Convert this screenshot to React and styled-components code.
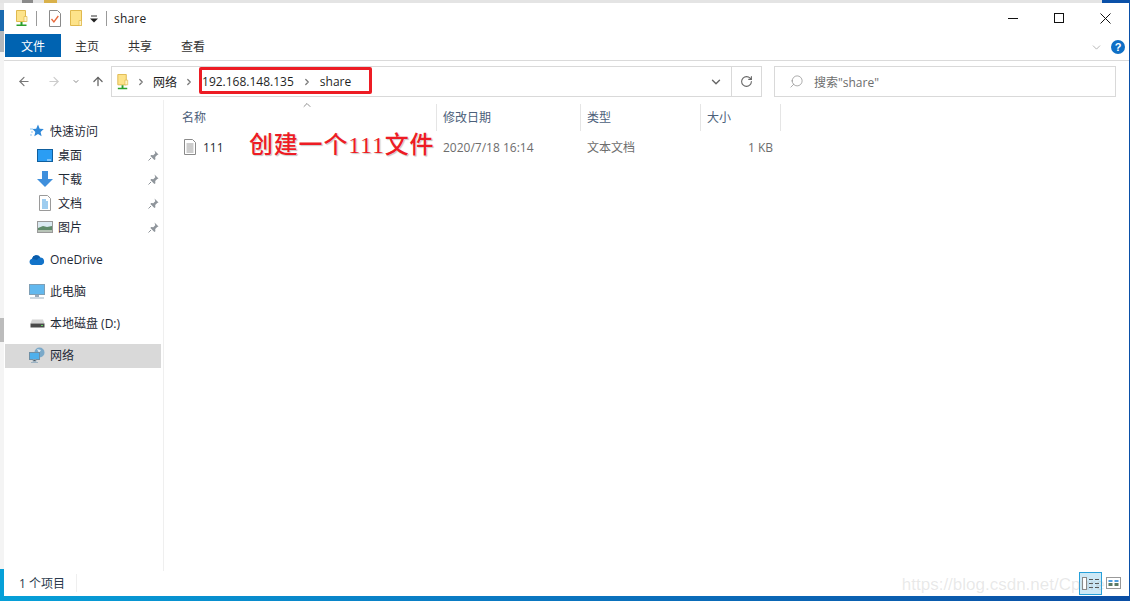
import React from 'react';
import styled, {createGlobalStyle} from 'styled-components';
import {ArrowLeft, ArrowRight, ArrowUp, ChevronDown, ChevronUp, ChevronRight, RotateCw, Search} from 'lucide-react';

const GlobalStyle = createGlobalStyle`
    html, body {
        margin: 0;
        height: 100%;
        overflow: hidden;
    }
    * {
        box-sizing: border-box;
    }
`;

const UI_FONT = `"Open Sans", "Noto Sans CJK SC", sans-serif`;

const Desktop = styled.div`
    position: relative;
    width: 1130px;
    height: 601px;
    padding: 3px 1px 5px 4px;
    display: flex;
    background:
        linear-gradient(to right, #06a0d8 0, #0a7cc4 40%, #0a4ea4 100%) bottom / 100% 5px no-repeat,
        linear-gradient(to right, #e4e4e4 0, #e4e4e4 22px, #8a8a8a 22px, #8a8a8a 33px, #e4e4e4 33px, #e4e4e4 44px, #d9b14a 44px, #d9b14a 57px, #e4e4e4 57px, #e4e4e4 1102px, #0a50a8 1102px) top / 100% 3px no-repeat,
        linear-gradient(#e8e8e8 0, #e8e8e8 10px, #1a6bb0 10px, #1a6bb0 31px, #b4b8bc 31px, #b4b8bc 52px, #f4f4f4 52px, #f4f4f4 318px, #bcbcbc 318px, #bcbcbc 342px, #f4f4f4 342px, #f4f4f4 569px, #06a0d8 569px) left / 4px 100% no-repeat,
        #0a50a8;
`;

const Window = styled.div`
    position: relative;
    flex: 1;
    display: flex;
    flex-direction: column;
    background: #fff;
    font-family: ${UI_FONT};
    font-size: 12px;
    color: #1a1a1a;
`;

const TitleBar = styled.div`
    height: 31px;
    display: flex;
    align-items: center;
    padding-left: 12px;
    flex-shrink: 0;
`;

const TitleIcon = styled.span`
    display: flex;
    width: ${p => p.$w || 12}px;
    margin-right: ${p => p.$mr || 0}px;
`;

const TitleSep = styled.span`
    width: 1px;
    height: 15px;
    background: #9a9a9a;
    margin-right: ${p => p.$mr}px;
`;

const TitleText = styled.span`
    font-size: 12px;
    color: #222;
    letter-spacing: .2px;
`;

const WindowControls = styled.div`
    margin-left: auto;
    display: flex;
    height: 100%;
    padding-right: 1px;
`;

const ControlButton = styled.div`
    width: 46px;
    height: 100%;
    display: flex;
    align-items: center;
    justify-content: center;
    padding-bottom: 1px;
`;

const Ribbon = styled.div`
    height: 27px;
    display: flex;
    align-items: flex-start;
    padding-left: 1px;
    border-bottom: 1px solid #dadada;
    flex-shrink: 0;
`;

const Tab = styled.div`
    width: ${p => p.$active ? 56 : 53}px;
    height: 23px;
    padding-right: ${p => p.$active ? 0 : 1}px;
    display: flex;
    align-items: center;
    justify-content: center;
    background: ${p => p.$active ? '#0063b1' : 'transparent'};
    color: ${p => p.$active ? '#fff' : '#333'};
    font-size: 12px;
`;

const RibbonEnd = styled.div`
    margin-left: auto;
    display: flex;
    align-items: center;
    height: 26px;
    padding-right: 4px;
    gap: 8px;
`;

const HelpBadge = styled.div`
    width: 14px;
    height: 14px;
    border-radius: 50%;
    background: #0f6fc6;
    color: #fff;
    font: bold 11px "Liberation Sans", sans-serif;
    display: flex;
    align-items: center;
    justify-content: center;
`;

const AddressRow = styled.div`
    height: 39px;
    padding: 5px 13px 3px 0;
    display: flex;
    flex-shrink: 0;
`;

const NavButtons = styled.div`
    width: 107px;
    display: flex;
    align-items: center;
    padding-left: 13px;
`;

const NavSlot = styled.span`
    display: flex;
    justify-content: center;
    width: ${p => p.$w}px;
    margin-right: ${p => p.$mr || 0}px;
`;

const AddressBox = styled.div`
    position: relative;
    width: 651px;
    border: 1px solid #d9d9d9;
    display: flex;
    align-items: center;
    padding-left: 5px;
    margin-right: 12px;
`;

const Crumb = styled.span`
    margin: 0 ${p => p.$mx || 0}px;
    color: #1f1f1f;
    white-space: nowrap;
`;

const CrumbArrow = styled.span`
    display: flex;
    justify-content: center;
    width: 12px;
    margin-left: ${p => p.$ml || 0}px;
    color: #7a7a7a;
`;

const AddressTools = styled.div`
    margin-left: auto;
    height: 100%;
    display: flex;
`;

const AddressTool = styled.div`
    width: ${p => p.$w}px;
    display: flex;
    align-items: center;
    justify-content: center;
    color: #666;
    border-left: ${p => p.$divided ? '1px solid #d9d9d9' : 'none'};
`;

const RedFrame = styled.div`
    position: absolute;
    left: 87px;
    top: 0;
    width: 173px;
    height: 27px;
    border: 3px solid #ed1c24;
    border-radius: 2px;
`;

const SearchBox = styled.div`
    flex: 1;
    border: 1px solid #d9d9d9;
    display: flex;
    align-items: center;
    padding-left: 14px;
    gap: 10px;
    color: #6d6d6d;
`;

const MirroredSearch = styled(Search)`
    transform: scaleX(-1);
`;

const Content = styled.div`
    flex: 1;
    display: flex;
    min-height: 0;
`;

const Sidebar = styled.nav`
    width: 160px;
    padding-top: 20px;
    border-right: 1px solid #efefef;
    flex-shrink: 0;
`;

const NavGroup = styled.div`
    margin-bottom: 8px;
`;

const NavItem = styled.div`
    height: 24px;
    margin: 0 2px 0 1px;
    padding: 0 2px 2px ${p => p.$child ? 32 : 24}px;
    display: flex;
    align-items: center;
    gap: 5px;
    background: ${p => p.$selected ? '#d9d9d9' : 'transparent'};
    color: #1f2a36;
`;

const NavIcon = styled.span`
    width: 16px;
    height: 16px;
    display: flex;
    align-items: center;
    justify-content: center;
    flex-shrink: 0;
`;

const PinSlot = styled.span`
    margin-left: auto;
    display: flex;
`;

const FileList = styled.section`
    position: relative;
    flex: 1;
    padding: 4px 0 0 11px;
`;

const Columns = styled.div`
    display: flex;
    height: 27px;
`;

const ColumnHead = styled.div`
    position: relative;
    width: ${p => p.$w}px;
    padding: 0 0 1px ${p => p.$pad}px;
    display: flex;
    align-items: center;
    border-right: 1px solid #e5e5e5;
    color: #4c607a;
`;

const SortArrow = styled.span`
    position: absolute;
    left: 126px;
    top: -5px;
    display: flex;
    color: #555;
`;

const FileRow = styled.div`
    display: flex;
    height: 24px;
    margin-top: 4px;
    align-items: center;
`;

const Cell = styled.div`
    width: ${p => p.$w}px;
    padding-left: ${p => p.$pad}px;
    padding-right: ${p => p.$right ? 8 : 0}px;
    text-align: ${p => p.$right ? 'right' : 'left'};
    color: ${p => p.$name ? '#1f2a36' : '#6d6d6d'};
    display: ${p => p.$name ? 'flex' : 'block'};
    align-items: center;
    gap: 6px;
`;

const Annotation = styled.div`
    position: absolute;
    left: 85px;
    top: 25px;
    font: 500 24px "Liberation Serif", "Noto Sans CJK SC", serif;
    letter-spacing: .8px;
    color: #ed1c24;
    white-space: nowrap;
    text-shadow: 0 0 2px #fff, 1px 1px 1px #b8b8b8;
`;

const StatusBar = styled.footer`
    position: relative;
    height: 25px;
    display: flex;
    align-items: center;
    padding: 0 0 1px 15px;
    flex-shrink: 0;
    color: #2a3a4c;
`;

const StatusSep = styled.span`
    position: absolute;
    left: 72px;
    top: 3px;
    width: 1px;
    height: 18px;
    background: #efefef;
`;

const ViewButtons = styled.div`
    margin-left: auto;
    display: flex;
    align-items: center;
    padding-right: 4px;
`;

const ViewButton = styled.div`
    width: 23px;
    height: 23px;
    display: flex;
    align-items: center;
    justify-content: center;
    border: 1px solid ${p => p.$active ? '#26a0da' : 'transparent'};
    background: ${p => p.$active ? '#cce8f6' : 'transparent'};
`;

const Watermark = styled.div`
    position: absolute;
    right: 24px;
    bottom: 1px;
    font: 17px "Liberation Sans", sans-serif;
    color: rgba(150, 150, 150, .22);
    white-space: nowrap;
`;

const Folder = ({w = 12, h = 17}) => (
    <svg width={w} height={h} viewBox="0 0 12 17">
        <path d="M.5.5h11v15h-11z" fill="#fde38a" stroke="#e0b94e"/>
        <path d="M9 10.500h2.500v5H9z" fill="#fff3c4" stroke="#e0b94e" strokeWidth=".7"/>
    </svg>
);

const ShareFolder = ({h = 17}) => (
    <svg width="12" height={h} viewBox="0 0 12 17">
        <path d="M.5.5h9v11h-9z" fill="#fde38a" stroke="#e0b94e"/>
        <path d="M8 6.500h3v5H8z" fill="#fff3c4" stroke="#e0b94e" strokeWidth=".7"/>
        <path d="M4.500 12h2v2.500h-2zM.5 14.500h10v1.600H.5z" fill="#2ca02c"/>
    </svg>
);

const CheckDoc = () => (
    <svg width="12" height="17" viewBox="0 0 12 17">
        <path d="M.5.5h8l3 3v13h-11z" fill="#fff" stroke="#8a8a8a"/>
        <path d="M2.500 9l2.400 3 4.400-6" fill="none" stroke="#e8683a" strokeWidth="1.300"/>
    </svg>
);

const Pin = () => (
    <svg width="11" height="11" viewBox="0 0 11 11">
        <path d="M6.500.5l4 4-1.300.6-2 2 .2 2.200-1 .7-4-4 .7-1 2.200.2 2-2z" fill="#8f959b"/>
        <path d="M3 8l-2.500 2.500" stroke="#8f959b"/>
    </svg>
);

const Star = () => (
    <svg width="14" height="14" viewBox="0 0 14 14">
        <path d="M8 .5l1.700 4.300 4.100.3-3.200 2.800 1 4.400L8 10l-3.700 2.300 1-4.400-2.700-2.800 3.600-.3z" fill="#2f88d8"/>
        <path d="M0 5h3M1 8h2M0 11h2" stroke="#8cc4ee"/>
    </svg>
);

const DesktopIcon = () => (
    <svg width="16" height="13" viewBox="0 0 16 13">
        <rect x=".5" y=".5" width="15" height="12" fill="#2a9df4" stroke="#0f5f9e"/>
        <path d="M10 11h4" stroke="#d5ecff"/>
    </svg>
);

const DownloadIcon = () => (
    <svg width="16" height="16" viewBox="0 0 16 16">
        <path d="M5 0h6v8h5l-8 8-8-8h5z" fill="#3f8fdc"/>
    </svg>
);

const DocsIcon = () => (
    <svg width="12" height="16" viewBox="0 0 12 16">
        <path d="M.5.500h8l3 3v12h-11z" fill="#fff" stroke="#9a9a9a"/>
        <path d="M3 5h4M3 7h6M3 9h6M3 11h6M3 13h6" stroke="#3f9ae0"/>
    </svg>
);

const PicturesIcon = () => (
    <svg width="16" height="12" viewBox="0 0 16 12">
        <rect x=".5" y=".5" width="15" height="11" fill="#dbeaf2" stroke="#9a9a9a"/>
        <path d="M1 7l5-2 4 1 5-1v4H1z" fill="#5f8a6a"/>
        <path d="M1 9h14v2H1z" fill="#b8c4b8"/>
    </svg>
);

const CloudIcon = () => (
    <svg width="16" height="11" viewBox="0 0 16 11">
        <path d="M3.500 11A3.200 3.200 0 0 1 3 4.700 4.500 4.500 0 0 1 11.300 3.600 3.800 3.800 0 0 1 12.500 11z" fill="#1273c9"/>
        <path d="M3 4.700A4.500 4.500 0 0 1 11.300 3.600 3.800 3.800 0 0 0 8 6z" fill="#0a5cab"/>
    </svg>
);

const PcIcon = () => (
    <svg width="16" height="15" viewBox="0 0 16 15">
        <rect x=".5" y=".5" width="15" height="10" fill="#62b8ee" stroke="#7f9fb5"/>
        <path d="M6 11h4v2H6z" fill="#9ab"/>
        <path d="M1 14h14" stroke="#9db2c2"/>
    </svg>
);

const DriveIcon = () => (
    <svg width="15" height="9" viewBox="0 0 15 9">
        <path d="M2 .5h11l1.500 4h-14z" fill="#d4d4d4"/>
        <rect x=".5" y="4.500" width="14" height="4" fill="#4a4a4a"/>
        <path d="M11 6.500h2" stroke="#5fd35f"/>
    </svg>
);

const NetworkIcon = () => (
    <svg width="16" height="16" viewBox="0 0 16 16">
        <circle cx="10.500" cy="5.500" r="5" fill="#7ba9c9"/>
        <path d="M8 2l4 1-2 3z" fill="#dbe9f2"/>
        <rect x=".5" y="5.500" width="10" height="7" fill="#4fb0ec" stroke="#6f8fa5"/>
        <path d="M4 13h3v1.500H4zM2 15.500h7" stroke="#9db2c2"/>
    </svg>
);

const TextFileIcon = () => (
    <svg width="14" height="16" viewBox="0 0 14 16">
        <path d="M1.500.500h8l3 3v12h-11z" fill="#fff" stroke="#8a8a8a"/>
        <path d="M3.500 5h7M3.500 7h7M3.500 9h7M3.500 11h7M3.500 13h7" stroke="#9a9a9a"/>
    </svg>
);

const DetailsIcon = () => (
    <svg width="17" height="13" viewBox="0 0 17 13">
        <rect x=".5" y=".5" width="4" height="12" fill="#fff" stroke="#888"/>
        <path d="M7 2.500h4M13 2.500h4M7 6.500h4M13 6.500h4M7 10.500h4M13 10.500h4" stroke="#555"/>
    </svg>
);

const LargeIcon = () => (
    <svg width="15" height="12" viewBox="0 0 15 12">
        <rect x=".5" y=".5" width="14" height="11" fill="#fff" stroke="#999"/>
        <path d="M2.500 3h4v2h-4zM8.500 3h4v2h-4z" fill="#4d9de0"/>
        <path d="M2.500 6h4v3h-4zM8.500 6h4v3h-4z" fill="#5a7a66"/>
    </svg>
);

const quickAccess = [
    {label: '桌面', icon: <DesktopIcon />},
    {label: '下载', icon: <DownloadIcon />},
    {label: '文档', icon: <DocsIcon />},
    {label: '图片', icon: <PicturesIcon />},
];

const App = () => (
    <Desktop>
        <GlobalStyle />
        <Window>
            <TitleBar>
                <TitleIcon $mr={8}><ShareFolder /></TitleIcon>
                <TitleSep $mr={12} />
                <TitleIcon $mr={9}><CheckDoc /></TitleIcon>
                <TitleIcon $mr={8}><Folder /></TitleIcon>
                <TitleIcon $w={8} $mr={8}>
                    <svg width="8" height="8" viewBox="0 0 8 8">
                        <path d="M1 1h6" stroke="#333"/>
                        <path d="M0 3.500h8L4 7.500z" fill="#222"/>
                    </svg>
                </TitleIcon>
                <TitleSep $mr={7} />
                <TitleText>share</TitleText>
                <WindowControls>
                    <ControlButton>
                        <svg width="10" height="10" viewBox="0 0 10 10"><path d="M0 5.500h10" stroke="#111"/></svg>
                    </ControlButton>
                    <ControlButton>
                        <svg width="10" height="10" viewBox="0 0 10 10"><rect x=".5" y=".5" width="9" height="9" fill="none" stroke="#111"/></svg>
                    </ControlButton>
                    <ControlButton>
                        <svg width="11" height="11" viewBox="0 0 11 11"><path d="M.5.500l10 10M10.500.500l-10 10" stroke="#111"/></svg>
                    </ControlButton>
                </WindowControls>
            </TitleBar>
            <Ribbon>
                <Tab $active>文件</Tab>
                <Tab>主页</Tab>
                <Tab>共享</Tab>
                <Tab>查看</Tab>
                <RibbonEnd>
                    <ChevronDown size={13} color="#a0a0a0" strokeWidth={1.4} />
                    <HelpBadge>?</HelpBadge>
                </RibbonEnd>
            </Ribbon>
            <AddressRow>
                <NavButtons>
                    <NavSlot $w={14} $mr={16}><ArrowLeft size={15} color="#777" strokeWidth={2} /></NavSlot>
                    <NavSlot $w={14} $mr={11}><ArrowRight size={15} color="#ccc" strokeWidth={2} /></NavSlot>
                    <NavSlot $w={8} $mr={11}><ChevronDown size={9} color="#888" strokeWidth={3} /></NavSlot>
                    <NavSlot $w={14}><ArrowUp size={15} color="#666" strokeWidth={2.2} /></NavSlot>
                </NavButtons>
                <AddressBox>
                    <ShareFolder h={16} />
                    <CrumbArrow $ml={6}><ChevronRight size={10} strokeWidth={3} /></CrumbArrow>
                    <Crumb $mx={6}>网络</Crumb>
                    <CrumbArrow><ChevronRight size={10} strokeWidth={3} /></CrumbArrow>
                    <Crumb $mx={7}>192.168.148.135</Crumb>
                    <CrumbArrow><ChevronRight size={10} strokeWidth={3} /></CrumbArrow>
                    <Crumb $mx={7}>share</Crumb>
                    <AddressTools>
                        <AddressTool $w={30}><ChevronDown size={14} strokeWidth={2.4} /></AddressTool>
                        <AddressTool $w={30} $divided><RotateCw size={13} strokeWidth={2} /></AddressTool>
                    </AddressTools>
                    <RedFrame />
                </AddressBox>
                <SearchBox>
                    <MirroredSearch size={15} strokeWidth={1.1} color="#888" />
                    <span>搜索"share"</span>
                </SearchBox>
            </AddressRow>
            <Content>
                <Sidebar>
                    <NavGroup>
                        <NavItem>
                            <NavIcon><Star /></NavIcon>
                            快速访问
                        </NavItem>
                        {quickAccess.map(item => (
                            <NavItem $child key={item.label}>
                                <NavIcon>{item.icon}</NavIcon>
                                {item.label}
                                <PinSlot><Pin /></PinSlot>
                            </NavItem>
                        ))}
                    </NavGroup>
                    <NavGroup>
                        <NavItem><NavIcon><CloudIcon /></NavIcon>OneDrive</NavItem>
                    </NavGroup>
                    <NavGroup>
                        <NavItem><NavIcon><PcIcon /></NavIcon>此电脑</NavItem>
                    </NavGroup>
                    <NavGroup>
                        <NavItem><NavIcon><DriveIcon /></NavIcon>本地磁盘 (D:)</NavItem>
                    </NavGroup>
                    <NavGroup>
                        <NavItem $selected><NavIcon><NetworkIcon /></NavIcon>网络</NavItem>
                    </NavGroup>
                </Sidebar>
                <FileList>
                    <Columns>
                        <ColumnHead $w={262} $pad={7}>
                            名称
                            <SortArrow><ChevronUp size={12} strokeWidth={1.3} /></SortArrow>
                        </ColumnHead>
                        <ColumnHead $w={144} $pad={6}>修改日期</ColumnHead>
                        <ColumnHead $w={120} $pad={6}>类型</ColumnHead>
                        <ColumnHead $w={80} $pad={6}>大小</ColumnHead>
                    </Columns>
                    <FileRow>
                        <Cell $w={262} $pad={8} $name><TextFileIcon />111</Cell>
                        <Cell $w={144} $pad={6}>2020/7/18 16:14</Cell>
                        <Cell $w={120} $pad={6}>文本文档</Cell>
                        <Cell $w={80} $right>1 KB</Cell>
                    </FileRow>
                    <Annotation>创建一个111文件</Annotation>
                </FileList>
            </Content>
            <StatusBar>
                1 个项目
                <StatusSep />
                <Watermark>https://blog.csdn.net/Cpure</Watermark>
                <ViewButtons>
                    <ViewButton $active><DetailsIcon /></ViewButton>
                    <ViewButton><LargeIcon /></ViewButton>
                </ViewButtons>
            </StatusBar>
        </Window>
    </Desktop>
);

export default App;
